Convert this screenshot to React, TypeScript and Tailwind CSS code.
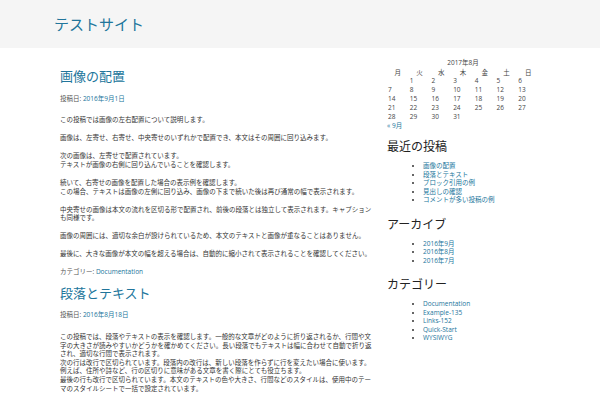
import React from "react";

const weeks: (number | null)[][] = [
  [null, 1, 2, 3, 4, 5, 6],
  [7, 8, 9, 10, 11, 12, 13],
  [14, 15, 16, 17, 18, 19, 20],
  [21, 22, 23, 24, 25, 26, 27],
  [28, 29, 30, 31, null, null, null],
];

const days = ["月", "火", "水", "木", "金", "土", "日"];

function Widget({ title, items }: { title: string; items: string[] }) {
  return (
    <section className="mt-[13px]">
      <h3 className="text-[12px] leading-[14px] text-[#222]">{title}</h3>
      <ul className="mt-[7.7px] list-disc pl-[36px] text-[#333]">
        {items.map((t) => (
          <li key={t} className="leading-[8.6px]">
            <a className="text-[#21759b]">{t}</a>
          </li>
        ))}
      </ul>
    </section>
  );
}

export default function App() {
  return (
    <div className="h-[400px] overflow-hidden bg-white font-['Open_Sans','Noto_Sans_CJK_JP',sans-serif] text-[#333] [text-spacing-trim:space-all]">
      <header className="flex h-[48px] items-center bg-[#f5f5f5] px-[54px]">
        <a className="text-[15px] leading-[20px] text-[#21759b]">テストサイト</a>
      </header>
      <div className="flex pl-[60px]">
        <main className="w-[316px] pt-[19px] text-[6.5px] leading-[8.6px]">
          <article>
            <h2 className="text-[13px] leading-[18px] text-[#21759b]">画像の配置</h2>
            <div className="mb-[13.7px] mt-[8.7px] leading-[9px] text-[#555]">
              投稿日: <a className="text-[#21759b]">2016年9月1日</a>
            </div>
            <p className="mb-[9.4px]">この投稿では画像の左右配置について説明します。</p>
            <p className="mb-[9.4px]">画像は、左寄せ、右寄せ、中央寄せのいずれかで配置でき、本文はその周囲に回り込みます。</p>
            <p className="mb-[9.4px]">
              次の画像は、左寄せで配置されています。
              <br />
              テキストが画像の右側に回り込んでいることを確認します。
            </p>
            <p className="mb-[9.4px]">
              続いて、右寄せの画像を配置した場合の表示例を確認します。
              <br />
              この場合、テキストは画像の左側に回り込み、画像の下まで続いた後は再び通常の幅で表示されます。
            </p>
            <p className="mb-[9.4px]">中央寄せの画像は本文の流れを区切る形で配置され、前後の段落とは独立して表示されます。キャプションも同様です。</p>
            <p className="mb-[9.4px]">画像の周囲には、適切な余白が設けられているため、本文のテキストと画像が重なることはありません。</p>
            <p className="mb-[9.4px]">最後に、大きな画像が本文の幅を超える場合は、自動的に縮小されて表示されることを確認してください。</p>
            <div className="text-[#555]">
              カテゴリー: <a className="text-[#21759b]">Documentation</a>
            </div>
          </article>
          <article className="mt-[7px]">
            <h2 className="text-[13px] leading-[18px] text-[#21759b]">段落とテキスト</h2>
            <div className="mb-[13.7px] mt-[8.7px] leading-[9px] text-[#555]">
              投稿日: <a className="text-[#21759b]">2016年8月18日</a>
            </div>
            <p className="mb-[9.4px]">
              この投稿では、段落やテキストの表示を確認します。一般的な文章がどのように折り返されるか、行間や文字の大きさが読みやすいかどうかを確かめてください。長い段落でもテキストは幅に合わせて自動で折り返され、適切な行間で表示されます。
              <br />
              次の行は改行で区切られています。段落内の改行は、新しい段落を作らずに行を変えたい場合に使います。例えば、住所や詩など、行の区切りに意味がある文章を書く際にとても役立ちます。
              <br />
              最後の行も改行で区切られています。本文のテキストの色や大きさ、行間などのスタイルは、使用中のテーマのスタイルシートで一括で設定されています。
            </p>
          </article>
        </main>
        <aside className="ml-[11px] w-[153px] pt-[9.7px] text-[6.5px] leading-[8.6px]">
          <div className="w-[152px] text-[#444]">
            <div className="mb-[1.5px] h-[9px] text-center leading-[9px]">2017年8月</div>
            <div className="grid grid-cols-7">
              {days.map((d) => (
                <div key={d} className="h-[9px] text-center leading-[9px]">
                  {d}
                </div>
              ))}
              {weeks.flat().map((n, i) => (
                <div key={i} className="h-[8.9px] pl-[1px] leading-[8.9px]">
                  {n ?? ""}
                </div>
              ))}
            </div>
            <div className="h-[8.6px] leading-[8.6px]">
              <a className="text-[#21759b]">« 9月</a>
            </div>
          </div>
          <div className="-mt-[3px]">
            <Widget
              title="最近の投稿"
              items={["画像の配置", "段落とテキスト", "ブロック引用の例", "見出しの確認", "コメントが多い投稿の例"]}
            />
          </div>
          <Widget title="アーカイブ" items={["2016年9月", "2016年8月", "2016年7月"]} />
          <Widget
            title="カテゴリー"
            items={["Documentation", "Example-135", "Links-152", "Quick-Start", "WYSIWYG"]}
          />
        </aside>
      </div>
    </div>
  );
}
